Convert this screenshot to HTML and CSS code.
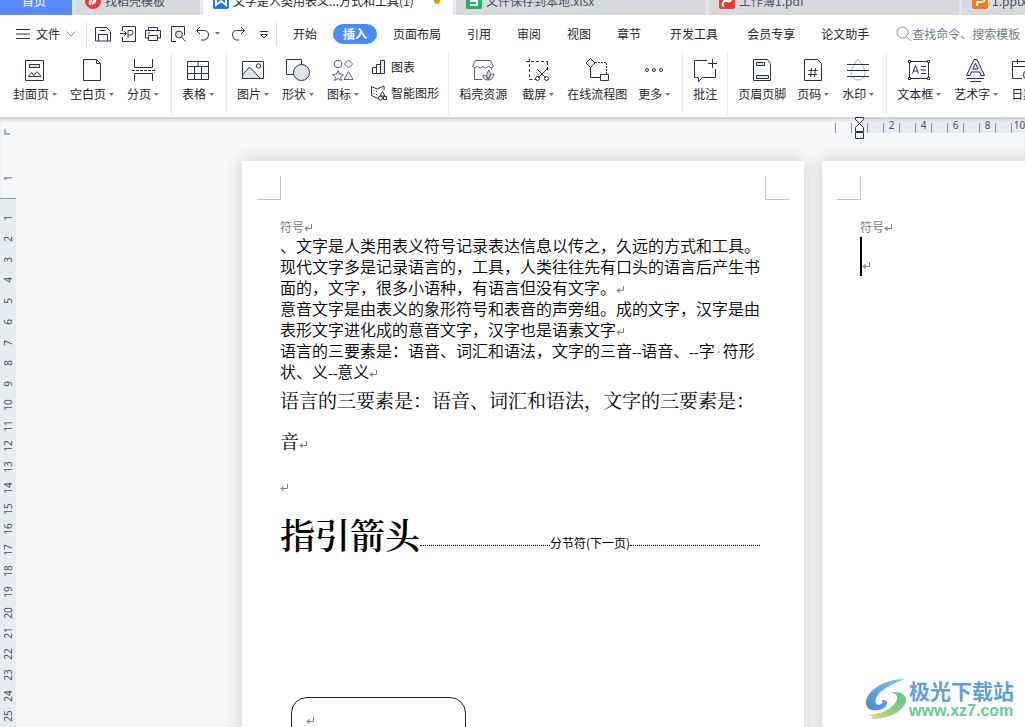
FILE: index.html
```html
<!DOCTYPE html>
<html lang="zh-CN">
<head>
<meta charset="utf-8">
<title>文字是人类用表义符号</title>
<link rel="stylesheet" href="styles.css">
</head>
<body>
<svg class="defs" aria-hidden="true">
  <symbol id="ret" viewBox="0 0 8 8"><path d="M7.5 0v4.500H1M3.500 2 1 4.500 3.500 7M3 3v3M2 4v1"/></symbol>
  <symbol id="caret" viewBox="0 0 5 3"><path d="M0 0h5L2.500 3z"/></symbol>
</svg>

<nav class="tabs">
  <button class="tab home">首页</button>
  <button class="tab docer"><svg class="logo" viewBox="0 0 16 16"><rect width="16" height="16" rx="8" fill="#f5333f"/><path d="M4 12c-1-4 1-6 2-7 1 2 1 4 0 7M7 12c0-5 3-8 5-8 0 4-2 7-5 8" fill="#fff"/></svg>找稻壳模板</button>
  <button class="tab active"><svg class="logo" viewBox="0 0 16 16"><rect width="16" height="16" rx="2" fill="#1677ff"/><path d="M3 4v8l5-4 5 4V4" fill="none" stroke="#fff" stroke-width="2"/></svg>文字是人类用表义...方式和工具(1)<i class="dot"></i></button>
  <button class="tab"><svg class="logo" viewBox="0 0 16 16"><rect width="16" height="16" rx="2" fill="#19b955"/><path d="M12 4H5v4h6v4H4" fill="none" stroke="#fff" stroke-width="2"/></svg>文件保存到本地.xlsx</button>
  <button class="tab"><svg class="logo" viewBox="0 0 16 16"><rect width="16" height="16" rx="2" fill="#f03a37"/><path d="M4 5h7q2 0 1 2t-4 1-4 2 1 3" fill="none" stroke="#fff" stroke-width="2"/></svg>工作簿1.pdf</button>
  <button class="tab"><svg class="logo" viewBox="0 0 16 16"><rect width="16" height="16" rx="2" fill="#f87a14"/><path d="M5 13V9h6q2-1 1-4H4" fill="none" stroke="#fff" stroke-width="2"/></svg>1.pptx</button>
</nav>

<header class="menu">
  <button class="file"><svg class="burger" viewBox="0 0 14 10"><path d="M0 .5h14M0 5h14M0 9.500h14"/></svg>文件<svg class="chev" viewBox="0 0 10 6"><path d="M.5.5 5 5 9.500.5"/></svg></button>
  <div class="quick">
    <button aria-label="保存"><svg viewBox="0 0 16 16"><path d="M.5 1.500h11l4 4v9.500H.5zM3.500 15V8.500h9V15M4.500 4.500h6"/></svg></button>
    <button aria-label="输出为PDF"><svg viewBox="0 0 16 16"><path d="M2.500 5V.5h13v15h-13V11M0 7.500h6M4 5l2.500 2.500L4 10M8 12V4.500h3q2 0 2 2t-2 2.500H8"/></svg></button>
    <button aria-label="打印"><svg viewBox="0 0 16 16"><path d="M3.500 4V1.500h9V4M3.500 12h-3V4.500h15V12h-3M3.500 9.500h9v5h-9zM3 7h2"/></svg></button>
    <button aria-label="打印预览"><svg viewBox="0 0 16 16"><path d="M6 15.500H1.500V.5h13V9"/><circle cx="9" cy="8.500" r="3.500" fill="#dfe2e8"/><path d="m11.500 11 4 4.500"/></svg></button>
    <button aria-label="撤销"><svg viewBox="0 0 16 16"><path d="M5 1 1.500 4.500 5 8M2 4.500h7.500q4 0 4 4.500t-4 5H6"/></svg></button>
    <svg class="caret"><use href="#caret"/></svg>
    <button class="redo" aria-label="恢复"><svg viewBox="0 0 16 16"><path d="m11 1 3.500 3.500L11 8M14 4.500H6.500q-4 0-4 4.500t4 5H9"/></svg></button>
    <button class="slim" aria-label="更多快捷命令"><svg viewBox="0 0 10 16"><path d="M1 5.500h8M1.500 8.500h7L5 12z"/></svg></button>
  </div>
  <div class="menus">
    <button>开始</button><button class="on">插入</button><button>页面布局</button><button>引用</button><button>审阅</button><button>视图</button><button>章节</button><button class="apart">开发工具</button><button class="apart">会员专享</button><button>论文助手</button>
  </div>
  <label class="search"><svg viewBox="0 0 16 16"><circle cx="6.500" cy="6.500" r="5.500"/><path d="m10.500 10.500 4.500 4.500"/></svg><input type="text" placeholder="查找命令、搜索模板"></label>
</header>

<section class="ribbon">
  <div class="group">
    <button class="tool"><svg viewBox="0 0 24 24"><path d="M2.500 2.500h18v20h-18z"/><path class="g" d="M6.500 6.500h10v3h-10z"/><path d="m5.500 18.500 3-4 2.500 3 3-4 4 5z"/></svg><span>封面页<svg class="caret"><use href="#caret"/></svg></span></button>
    <button class="tool"><svg viewBox="0 0 24 24"><path d="M3.500 1.500h13l4 4v17h-17zM16.500 1.500v4h4"/></svg><span>空白页<svg class="caret"><use href="#caret"/></svg></span></button>
    <button class="tool"><svg viewBox="0 0 24 24"><path d="M3.500 1v8.500h18V1M3.500 23v-7.500h18V23"/><path d="M1 12.500h23" stroke-dasharray="3 1"/></svg><span>分页<svg class="caret"><use href="#caret"/></svg></span></button>
  </div>
  <div class="group">
    <button class="tool"><svg viewBox="0 0 24 24"><path d="M1.500 3.500h21v18h-21zM1.500 8.500h21M1.500 15.500h21M8.500 8.500v13M15.500 8.500v13M12 3.500v5"/></svg><span>表格<svg class="caret"><use href="#caret"/></svg></span></button>
  </div>
  <div class="group">
    <button class="tool"><svg viewBox="0 0 24 24"><path d="M1.500 3.500h21v17h-21z"/><path class="g" d="m1.500 17 7-8 11 11.500h-18z"/><circle cx="17.500" cy="8" r="2.200"/></svg><span>图片<svg class="caret"><use href="#caret"/></svg></span></button>
    <button class="tool"><svg viewBox="0 0 24 24"><path d="M.5 1.500h15v15H.5z"/><circle class="g" cx="15.500" cy="14.500" r="8"/></svg><span>形状<svg class="caret"><use href="#caret"/></svg></span></button>
    <button class="tool thin"><svg viewBox="0 0 24 24"><circle cx="7" cy="6" r="3.800"/><path d="m17.500 2 4 4-4 4-4-4zM17.500 13.500l4.500 8h-9zM7 12.500l1.500 3.500 4 .5-3 2.500 1 3.500L7 20.500 3.500 22.500l1-3.500-3-2.500 4-.5z"/></svg><span>图标<svg class="caret"><use href="#caret"/></svg></span></button>
    <div class="stack">
      <button class="row"><svg viewBox="0 0 16 16"><path d="M1.500 8.500h4v6h-4zM5.500 5.500h4v9h-4z"/><path class="g" d="M9.500 1.500h4v13h-4z"/></svg>图表</button>
      <button class="row"><svg viewBox="0 0 16 16"><path d="M7 13.500.5 10.500v-9L6 4l7-3v4M3 5v1M3 8.500v1M5.500 6v1M5.500 9v1"/><path d="M11.500 6.500 14 11H9z"/><circle cx="9.500" cy="13" r="2"/><path d="M12.500 11.500h3v3h-3z"/></svg>智能图形</button>
    </div>
  </div>
  <div class="group">
    <button class="tool plain wide thin"><svg viewBox="0 0 24 24"><path d="M11 21.500H3.500V10M4.500 2.500h15l3 6q-2 3-5 0-3 3-5.500 0-3 3-5.500 0-3 3-5 0zM20.500 10v2"/><path class="g" d="M17 22q-3-5 1-10 3 5-1 10zq-1-5-5-5 0 5 5 5zq1-6 6-6-1 6-6 6z"/></svg><span>稻壳资源</span></button>
    <button class="tool"><svg viewBox="0 0 24 24"><path d="M0 3.500h22M3.500 1v21M21.500 4v8M3.500 21.500h7" stroke-dasharray="3 2"/><path d="m11 11 9 9M21 11l-9 9"/><circle cx="11.500" cy="20.500" r="2"/><circle cx="20.500" cy="20.500" r="2"/></svg><span>截屏<svg class="caret"><use href="#caret"/></svg></span></button>
    <button class="tool plain"><svg viewBox="0 0 24 24"><path d="M5.500 10v9.500H15M15.500 16.500h8v6h-8z"/><path d="M10 4.500h11.500V16" stroke-dasharray="2 1"/><path class="g" d="m5.500.5 4.500 4.500-4.500 4.500L1 5z"/></svg><span>在线流程图</span></button>
    <button class="tool"><svg viewBox="0 0 24 24"><circle cx="5" cy="12" r="1.500"/><circle cx="12" cy="12" r="1.500"/><circle cx="19" cy="12" r="1.500"/></svg><span>更多<svg class="caret"><use href="#caret"/></svg></span></button>
  </div>
  <div class="group">
    <button class="tool plain"><svg viewBox="0 0 24 24"><path d="M14 2.500H1.500v17h4v4l4-4h13V11M19.500 1v9M15 5.500h9"/></svg><span>批注</span></button>
  </div>
  <div class="group">
    <button class="tool plain"><svg viewBox="0 0 24 24"><path d="M3.500 1.500h14l3 4v17h-17z"/><path class="g" d="M6.500 4.500h8v3h-8zM6.500 17.500h12v3h-12z"/></svg><span>页眉页脚</span></button>
    <button class="tool"><svg viewBox="0 0 24 24"><path d="M3.500 1.500h13l4 4v17h-17zM10.500 10l-1 9M14.500 10l-1 9M7.500 12.500h9M7 16.500h9"/></svg><span>页码<svg class="caret"><use href="#caret"/></svg></span></button>
    <button class="tool"><svg viewBox="0 0 24 24"><path class="soft" d="M12 1q7 9 7 14a7 7 0 0 1-14 0q0-5 7-14z"/><path d="M1 6.500h22M1 12.500h22M1 18.500h22"/></svg><span>水印<svg class="caret"><use href="#caret"/></svg></span></button>
  </div>
  <div class="group">
    <button class="tool"><svg viewBox="0 0 24 24"><path d="M2.500 3.500h19v17h-19zM5.500 15.500l3-8 3 8M6.500 13h4M14 8.500h5M14 12h5M14 15.500h5"/><path class="w" d="M1.500 2.500h2v2h-2zM20.500 2.500h2v2h-2zM1.500 19.500h2v2h-2zM20.500 19.500h2v2h-2z"/></svg><span>文本框<svg class="caret"><use href="#caret"/></svg></span></button>
    <button class="tool"><svg viewBox="0 0 24 24"><path class="g" d="M2.500 17.500 10 1.500h3l7.500 16h-3.500L15.500 14h-8L6 17.500zM9 11h5l-2.500-5.500z"/><path d="M3 20.500h17M6 23.500h11"/></svg><span>艺术字<svg class="caret"><use href="#caret"/></svg></span></button>
    <button class="tool plain"><svg viewBox="0 0 24 24"><path d="M11 20.500H1.500v-17h21V10M1.500 8.500h21M6.500 1v5M17.500 1v5"/><circle class="g" cx="18" cy="17" r="5.500"/></svg><span>日期</span></button>
  </div>
</section>

<main class="work">
  <div class="vruler">
    <i class="stop"></i>
    <div class="before">1</div>
    <div class="scale"><b>1</b><b>2</b><b>3</b><b>4</b><b>5</b><b>6</b><b>7</b><b>8</b><b>9</b><b>10</b><b>11</b><b>12</b><b>13</b><b>14</b><b>15</b><b>16</b><b>17</b><b>18</b><b>19</b><b>20</b><b>21</b><b>22</b><b>23</b><b>24</b><b>25</b></div>
  </div>
  <div class="area">
    <div class="hruler">
      <div class="lead"><b></b><b></b></div>
      <div class="body"><svg class="indent" viewBox="0 0 10 23"><path d="M.5.5h8v2l-4 4 4 4v4h-8v-4l4-4-4-4zM.5 15.500h8v6h-8z"/></svg><b></b><b>2</b><b></b><b>4</b><b></b><b>6</b><b></b><b>8</b><b></b><b>10</b></div>
    </div>
    <div class="pages">
      <article class="page first">
        <div class="corners"><i></i><i class="right"></i></div>
        <div class="content">
          <p class="head">符号<svg class="ret"><use href="#ret"/></svg></p>
          <p>、文字是人类用表义符号记录表达信息以传之，久远的方式和工具。<br>现代文字多是记录语言的，工具，人类往往先有口头的语言后产生书<br>面的，文字，很多小语种，有语言但没有文字。<svg class="ret"><use href="#ret"/></svg></p>
          <p>意音文字是由表义的象形符号和表音的声旁组。成的文字，汉字是由<br>表形文字进化成的意音文字，汉字也是语素文字<svg class="ret"><use href="#ret"/></svg></p>
          <p>语言的三要素是：语音、词汇和语法，文字的三音<span class="latin">--</span>语音、<span class="latin">--</span>字<span class="latin sp">·</span>符形<br>状、义<span class="latin">--</span>意义<svg class="ret"><use href="#ret"/></svg></p>
          <p class="large">语言的三要素是：语音、词汇和语法，文字的三要素是：<br>音<svg class="ret"><use href="#ret"/></svg></p>
          <p class="blank"><svg class="ret"><use href="#ret"/></svg></p>
          <div class="title"><h1>指引箭头</h1><span class="break">分节符(下一页)</span></div>
          <div class="shape"><svg class="ret"><use href="#ret"/></svg></div>
        </div>
      </article>
      <article class="page second">
        <div class="corners"><i></i></div>
        <div class="content">
          <p class="head">符号<svg class="ret"><use href="#ret"/></svg></p>
          <p class="cursor"><svg class="ret"><use href="#ret"/></svg></p>
        </div>
      </article>
    </div>
  </div>
</main>

<aside class="mark">
  <svg viewBox="0 0 42 42">
    <defs>
      <linearGradient id="b" x1="1" y1="0" x2="0" y2="1"><stop offset="0" stop-color="#7cc8f2"/><stop offset="1" stop-color="#4a86cf"/></linearGradient>
      <linearGradient id="y" x1="1" y1="0" x2="0" y2="1"><stop offset="0" stop-color="#5cc48d"/><stop offset=".6" stop-color="#8fd08a"/><stop offset="1" stop-color="#f2e27a"/></linearGradient>
    </defs>
    <path fill="url(#b)" d="M40 1C20 1 2 12 1 24c0 5 3 8 7 8 7 1 14-2 14-7 0-3-4-4-6-2 2 0 2 2 0 3-4 2-7-1-5-6C14 13 26 6 40 1z"/>
    <path fill="url(#y)" d="M19 17c7-4 14-2 13 4C30 29 18 36 4 37l4 2-3 2c16 1 34-7 36-18 1-9-12-12-22-6z"/>
  </svg>
  <div><strong>极光下载站</strong><a href="#">www.xz7.com</a></div>
</aside>
</body>
</html>
```

FILE: styles.css
```css
* { box-sizing: border-box; }
body {
  margin: 0;
  height: 100vh;
  overflow: hidden;
  position: relative;
  display: flex;
  flex-direction: column;
  background: #f5f7f9;
  color: #1f2533;
  font: 12px/16px "Noto Sans CJK SC", sans-serif;
}
button {
  border: 0;
  padding: 0;
  background: none;
  color: inherit;
  font: inherit;
  white-space: nowrap;
}
svg { flex: none; fill: none; stroke: #2b3244; }
p, h1 { margin: 0; }
.defs { position: absolute; width: 0; height: 0; }
.caret { width: 5px; height: 3px; fill: #6b7a94; stroke: none; }

.tabs {
  height: 15px;
  flex: none;
  display: flex;
  align-items: flex-end;
  gap: 3px;
  overflow: hidden;
  background: #e4e6ea;
}
.tab {
  flex: none;
  width: 250px;
  height: 28px;
  padding: 0 10px;
  display: flex;
  align-items: center;
  gap: 4px;
  background: #d7d9dd;
  color: #4a5162;
}
.tab.home { width: 72px; justify-content: center; padding-right: 14px; background: #5b8cff; color: #fff; }
.tab.docer { width: 125px; }
.tab.active { background: #fff; color: #1f2533; }
.logo { width: 16px; height: 16px; stroke: none; }
.dot { width: 6px; height: 6px; margin-left: auto; margin-right: 3px; border-radius: 3px; background: #ef9a00; }

.menu {
  flex: none;
  height: 37px;
  display: flex;
  align-items: center;
  background: #fff;
}
.file {
  flex: none;
  width: 87px;
  height: 24px;
  padding-left: 16px;
  display: flex;
  align-items: center;
  gap: 6px;
  border-right: 1px solid #d9dce2;
}
.burger { width: 14px; height: 10px; }
.chev { width: 10px; height: 6px; stroke: #8a909c; }
.quick {
  flex: none;
  width: 190px;
  height: 24px;
  padding-left: 8px;
  display: flex;
  align-items: center;
  gap: 9px;
  border-right: 1px solid #d9dce2;
}
.quick button { display: flex; }
.quick button svg { width: 16px; height: 16px; }
.quick .redo { margin-left: 4px; }
.quick .slim { margin-left: 4px; }
.quick .slim svg { width: 10px; }
.quick .caret { margin: 0 -3px 0 -5px; }
.menus { flex: none; display: flex; align-items: center; margin-left: 3px; }
.menus button { padding: 0 13px; }
.menus .on { height: 20px; margin: 0 3px; padding: 0 10px; border-radius: 10px; background: #4a8cf5; color: #fff; font-weight: 700; }
.menus .apart { margin-left: 3px; }
.search { flex: 1; min-width: 0; display: flex; align-items: center; margin-left: 14px; }
.search svg { width: 16px; height: 16px; stroke: #7d8ba5; }
.search input { flex: 1; min-width: 0; border: 0; padding: 0; background: none; font: inherit; outline: 0; }
.search input::placeholder { color: #6b7b98; opacity: 1; }

.ribbon {
  flex: none;
  height: 65px;
  display: flex;
  overflow: hidden;
  background: #fff;
  padding-left: 3px;
}
.group { flex: none; display: flex; align-items: flex-start; height: 62px; padding: 6px 4px 0 5px; border-right: 1px solid #e8eaee; }
.group:last-child { border: 0; }
.tool { padding: 0 8px 0 5px; display: flex; flex-direction: column; align-items: center; gap: 4px; }
.tool.plain { padding-right: 6px; }
.tool.wide { padding-right: 10px; }
.tool > svg { width: 24px; height: 24px; }
.tool.thin > svg { stroke: #5a6070; }
.tool span { display: flex; align-items: center; gap: 3px; }
.g { fill: #e1e4e9; }
.w { fill: #fff; }
.soft { stroke: #a9afbb; }
.stack { display: flex; flex-direction: column; gap: 10px; padding: 1px 5px 0 4px; }
.row { display: flex; align-items: center; gap: 4px; }
.row svg { width: 16px; height: 16px; }

.work { flex: 1; min-height: 0; display: flex; box-shadow: inset 0 4px 4px -2px #c4c6ca; }
.vruler { width: 16px; flex: none; display: flex; flex-direction: column; font: 10px/16px "Noto Sans", sans-serif; color: #46506a; }
.stop { width: 6px; height: 6px; margin: 12px 0 0 4px; border: solid #aab0bc; border-width: 0 0 2px 2px; }
.before, .scale b { writing-mode: vertical-rl; transform: rotate(180deg); font-weight: 400; text-align: center; }
.before { height: 20px; margin-top: 33px; }
.scale { flex: 1; min-height: 0; margin-top: 10px; padding-top: 9px; display: flex; flex-direction: column; background: #e8ebf0; border-top: 1px solid #8593ad; }
.scale b { flex: 1; min-height: 0; }
.area { flex: 1; min-width: 0; overflow: hidden; display: flex; flex-direction: column; }
.hruler { height: 16px; flex: none; display: flex; margin-left: 819px; font: 10px/14px "Noto Sans", sans-serif; color: #46506a; }
.hruler b { flex: none; width: 16px; height: 10px; margin-top: 6px; font-weight: 400; text-align: center; line-height: 4px; border-left: 1px solid #8593ad; }
.lead { width: 25px; flex: none; display: flex; }
.body { position: relative; flex: 1; display: flex; padding-left: 7px; background: #e8ebf0; box-shadow: inset 0 4px 4px -2px #c4c6ca; }
.indent { position: absolute; left: -5px; top: 0; width: 10px; height: 23px; fill: #fff; }

.pages { flex: 1; display: flex; gap: 18px; padding: 28px 0 0 226px; }
.page { flex: none; width: 562px; padding-top: 15px; background: #fff; box-shadow: 0 0 16px rgba(0, 0, 0, .18); }
.corners { display: flex; justify-content: space-between; padding: 0 15px; }
.corners i { width: 24px; height: 24px; border: solid #c4c4c4; border-width: 0 1px 1px 0; }
.corners .right { border-width: 0 0 1px 1px; }
.content { padding: 19px 44px 0 38px; color: #000; font-size: 16px; font-weight: 350; line-height: 21px; white-space: nowrap; }
.content .head { font-size: 12px; font-weight: 400; line-height: 16px; color: #808080; }
.ret { width: 8px; height: 8px; stroke: #808080; }
.latin { font-family: "Liberation Serif", serif; font-size: 14px; line-height: 14px; }
.sp { display: inline-block; width: 8px; text-align: center; color: #808080; }
.content .large { margin-top: -3px; font-family: "Noto Serif CJK SC", "Noto Sans CJK SC", serif; font-size: 19px; font-weight: 400; line-height: 41px; }
.content .blank { line-height: 48px; }
.title { display: flex; align-items: center; height: 50px; }
.title h1 { font: 600 35px/50px "Noto Serif CJK SC", "Noto Sans CJK SC", serif; }
.break { flex: 1; display: flex; align-items: flex-end; font-size: 12px; font-weight: 400; line-height: 16px; margin-top: 18px; }
.break::before, .break::after { content: ""; flex: 1; height: 5px; border-top: 1px dotted #000; }
.shape { width: 175px; height: 60px; margin: 138px 0 0 11px; padding: 10px 14px; border: 1px solid #222; border-radius: 16px; }
.cursor { height: 39px; margin-top: 2px; padding-top: 16px; border-left: 2px solid #000; }

.mark { position: absolute; right: 11px; bottom: 7px; display: flex; align-items: center; gap: 2px; }
.mark svg { width: 42px; height: 42px; stroke: none; }
.mark div { display: flex; flex-direction: column; }
.mark strong { font-size: 21px; line-height: 24px; color: #5f9fd8; }
.mark a { font: 700 16px/18px "Liberation Sans", sans-serif; color: #6cc795; text-decoration: none; }
```
